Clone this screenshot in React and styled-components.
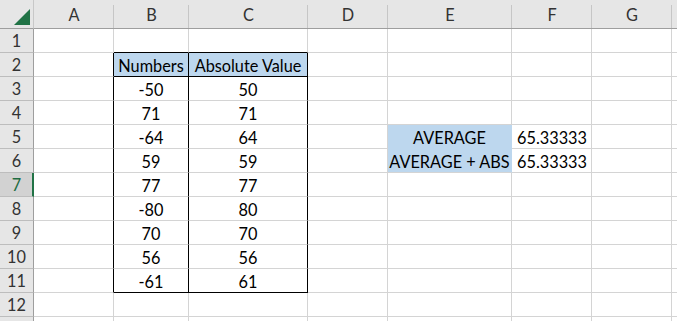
import React from 'react'
import styled, { createGlobalStyle } from 'styled-components'

const GlobalStyle = createGlobalStyle`
    html, body {
        margin: 0;
        padding: 0;
        background: #ffffff;
        overflow: hidden;
    }
`

const columns = ['A', 'B', 'C', 'D', 'E', 'F', 'G', '']
const numbers = [-50, 71, -64, 59, 77, -80, 70, 56, -61]
const GRID = '#d4d4d4'
const FILL = '#bdd7ee'
const INK = '#000000'

function cellFor(row, col) {
    // returns { text, align, fill, right, bottom }
    const cell = { text: '', align: 'center', fill: null, right: GRID, bottom: GRID }
    const inTable = row >= 2 && row <= 11
    if (col === 'A' && inTable) cell.right = INK
    if ((col === 'B' || col === 'C') && row === 1) cell.bottom = INK
    if (col === 'B' || col === 'C') {
        if (inTable) cell.right = INK
        if (row === 2 || row === 11) cell.bottom = INK
        if (row === 2) {
            cell.fill = FILL
            cell.text = col === 'B' ? 'Numbers' : 'Absolute Value'
        }
        if (row >= 3 && row <= 11) {
            const n = numbers[row - 3]
            cell.text = String(col === 'B' ? n : Math.abs(n))
        }
    }
    if (col === 'E' && (row === 5 || row === 6)) {
        cell.fill = FILL
        cell.right = FILL
        if (row === 5) cell.bottom = FILL
        cell.text = row === 5 ? 'AVERAGE' : 'AVERAGE + ABS'
    }
    if (col === 'F' && (row === 5 || row === 6)) {
        cell.text = '65.33333'
        cell.align = 'right'
    }
    return cell
}

export default function App() {
    const rows = Array.from({ length: 13 }, (_, i) => i + 1)
    return (
        <>
            <GlobalStyle />
            <Sheet>
                <Corner>
                    <svg width="16" height="16" viewBox="0 0 16 16">
                        <polygon points="16,0 16,16 0,16" fill="#217346" />
                    </svg>
                </Corner>
                {columns.map((c, i) => (
                    <ColHead key={'h' + i}>{c}</ColHead>
                ))}
                {rows.map(r => (
                    <React.Fragment key={r}>
                        {/* last row is only a sliver at the window edge, its number sits below it */}
                        <RowHead $active={r === 7}>{r < 13 ? r : ''}</RowHead>
                        {columns.map((c, i) => {
                            const cell = cellFor(r, c)
                            return (
                                <Cell
                                    key={r + '-' + i}
                                    $align={cell.align}
                                    $fill={cell.fill}
                                    $right={cell.right}
                                    $bottom={cell.bottom}
                                >
                                    {cell.text}
                                </Cell>
                            )
                        })}
                    </React.Fragment>
                ))}
            </Sheet>
        </>
    )
}

const Sheet = styled.div`
    display: grid;
    grid-template-columns: 34px 80px 75px 119px 80px 124px 80px 80px 1fr;
    grid-template-rows: 29px repeat(13, 24px);
    width: 677px;
    height: 321px;
    overflow: hidden;
    font-family: Lato, "Liberation Sans", sans-serif;
    font-size: 16.3px;
    color: #000;
`

const Corner = styled.div`
    box-sizing: border-box;
    background: #e6e6e6;
    border-right: 1px solid #c8c8c8;
    border-bottom: 1px solid #9e9e9e;
    display: flex;
    align-items: flex-end;
    justify-content: flex-end;
    padding: 0 3px 3px 0;
`

const ColHead = styled.div`
    position: relative;
    box-sizing: border-box;
    background: #e6e6e6;
    border-bottom: 1px solid #9e9e9e;
    display: flex;
    align-items: center;
    justify-content: center;
    padding-top: 1px;
    color: #333;
    &::after {
        content: '';
        position: absolute;
        right: 0;
        top: 5px;
        bottom: 0;
        width: 1px;
        background: #c6c6c6;
    }
`

const RowHead = styled.div`
    box-sizing: border-box;
    background: ${p => (p.$active ? '#d2d2d2' : '#e6e6e6')};
    border-right: ${p => (p.$active ? '2px solid #217346' : '1px solid #9e9e9e')};
    border-bottom: 1px solid #bdbdbd;
    display: flex;
    align-items: center;
    justify-content: center;
    padding-left: ${p => (p.$active ? '1px' : '0')};
    color: ${p => (p.$active ? '#1e6b41' : '#333')};
`

const Cell = styled.div`
    box-sizing: border-box;
    background: ${p => p.$fill || '#ffffff'};
    border-right: 1px solid ${p => p.$right};
    border-bottom: 1px solid ${p => p.$bottom};
    display: flex;
    align-items: center;
    justify-content: ${p => (p.$align === 'right' ? 'flex-end' : 'center')};
    padding: 1px 4px 0 4px;
    white-space: nowrap;
    overflow: hidden;
`
